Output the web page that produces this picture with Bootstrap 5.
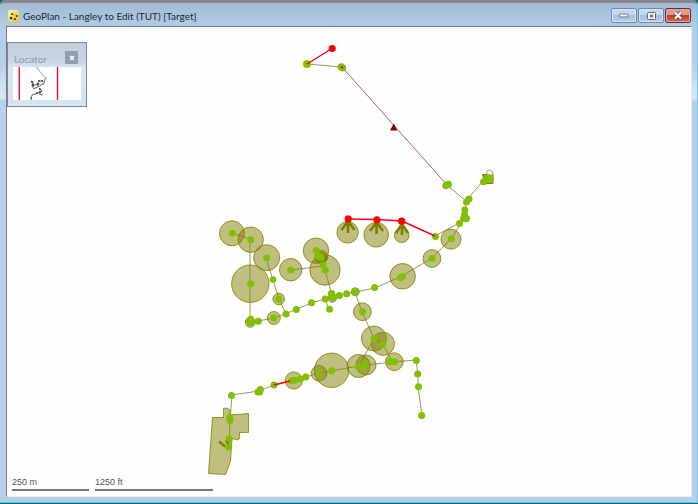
<!DOCTYPE html>
<html lang="en">
<head>
<meta charset="utf-8">
<meta name="viewport" content="width=device-width, initial-scale=1">
<title>GeoPlan - Langley to Edit (TUT) [Target]</title>
<link href="https://cdn.jsdelivr.net/npm/bootstrap@5.3.0/dist/css/bootstrap.min.css" rel="stylesheet">
<style>
body { font-family: Lato, "Open Sans", sans-serif; background: #006a80; }
.geo-window { background: linear-gradient(#a1bad7, #b5cfe9 27px, #b7d0e9 60px, #dae7f4 95px, #b7d0e9 98px); border-top: 3px solid #8b8789; border-right: 1px solid #6cc8e8; border-bottom: 1px solid #5cc8e0; border-radius: 5px 5px 0 0; padding: 0 5px 5px 6px; margin-bottom: 1px; }
.title-bar { height: 23px; padding: 2px 0 0 2px; }
.title-text { font-size: 10px; line-height: 16px; color: #1c2734; }
.win-buttons { gap: 1px; padding-right: 1px; }
.win-btn { width: 26px; height: 15px; padding: 0; border: 1px solid #6f88a6; border-radius: 2px; background: linear-gradient(#c4d7ec 50%, #a5bedb 50%, #b9d3ed); box-shadow: inset 0 0 0 1px #d7e5f4; }
.win-close { border-color: #6d2a2c; background: linear-gradient(#dd9a90 50%, #bd3b25 50%, #d0705a); box-shadow: inset 0 0 0 1px #e4a99f; }
.map-pane { min-height: 0; background: #fefefe; border: 1px solid; border-color: #77797f #e9e8ef #f1efea #77797f; }
.locator { top: 15px; left: 0; width: 80px; height: 65px; padding: 8px 5px 6px 5px; border: 1px solid #85868f; background: linear-gradient(#c2cfde, #c8d5e4 18px, #d9e7f4 26px, #d5e3f1); }
.locator-head { height: 16px; padding: 0 3px 0 1px; }
.locator-name { font-size: 10px; line-height: 16px; color: #8d98a5; }
.locator-close { width: 13px; height: 13px; padding: 0; border: 0; background: #929eae; }
.scale-row { left: 5px; bottom: 5px; gap: 6px; }
.scale-item { font: 9px/11px "Liberation Sans", Arial, sans-serif; color: #55525a; border-bottom: 2px solid #77727a; padding-bottom: 1px; }
.scale-m { width: 77px; }
.scale-ft { width: 118px; }
.area { fill: #808000; fill-opacity: .5; stroke: #808000; stroke-opacity: .8; }
.pipe { fill: none; stroke: #99995a; stroke-width: 1; }
.node { fill: #80c000; }
.alert-line { fill: none; stroke: #fa0010; stroke-width: 1.4; }
.arrow-mark { fill: none; stroke: #808000; stroke-width: 2.6; }
</style>
<script src="https://cdn.jsdelivr.net/npm/bootstrap@5.3.0/dist/js/bootstrap.bundle.min.js"></script>
</head>
<body class="vh-100 d-flex flex-column overflow-hidden">
<main class="geo-window flex-grow-1 d-flex flex-column">
  <header class="title-bar d-flex align-items-center">
    <svg width="11" height="12" viewBox="0 0 11 12" class="me-1 flex-shrink-0" aria-hidden="true">
      <defs><linearGradient id="gold" x2="1" y2="1"><stop stop-color="#fff7a8"/><stop offset="1" stop-color="#f5b719"/></linearGradient></defs>
      <rect width="11" height="12" rx="1.5" fill="url(#gold)"/><path d="M2 9 4 8 6 10M4 4 7 5 9 6" fill="none" stroke="#b59a42" stroke-width=".7"/>
      <g fill="#243047"><circle cx="4.2" cy="4" r="1"/><circle cx="3" cy="8" r="1.2"/><circle cx="8.7" cy="6" r="1"/><circle cx="7" cy="9" r="1"/></g>
    </svg>
    <h1 class="title-text fw-normal m-0 flex-grow-1 text-nowrap">GeoPlan - Langley to Edit (TUT) [Target]</h1>
    <div class="win-buttons d-flex flex-shrink-0">
      <button type="button" class="win-btn d-flex align-items-center justify-content-center" aria-label="Minimize"><svg width="10" height="5"><rect x=".5" y="1" width="8.500" height="3" rx="1" fill="#f6f5f0" stroke="#72767e"/></svg></button>
      <button type="button" class="win-btn d-flex align-items-center justify-content-center" aria-label="Maximize"><svg width="9" height="8"><rect x=".5" y=".5" width="8" height="7" rx="1" fill="#f8f7ef" stroke="#62666e"/><rect x="3" y="2.5" width="3" height="3" fill="#6d8295"/></svg></button>
      <button type="button" class="win-btn win-close d-flex align-items-center justify-content-center" aria-label="Close"><svg width="10" height="9" viewBox="0 0 10 9"><path d="M2 1.5 8 7.5M8 1.5 2 7.5" stroke="#654348" stroke-width="3.8"/><path d="M2 1.5 8 7.5M8 1.5 2 7.5" stroke="#fff" stroke-width="2.2"/></svg></button>
    </div>
  </header>
  <section class="map-pane flex-grow-1 position-relative overflow-hidden" aria-label="Map">
    <svg class="d-block w-100 h-100" viewBox="7 27 684 469" preserveAspectRatio="xMinYMin slice" role="img" aria-label="Network plan">
      <g class="pipe">
        <path d="M307 64 342 67"/>
        <path d="M342 67 447 185" stroke="#ac5c66"/>
        <path d="M447 185 466 201 483 181 489 178M466 201 465 217 459 223 435 236M465 217 451 239 432 258 402 276 375 288 355 292 332 297 311 303 285 314 274 318 258 321 250 322V239L232 233"/>
        <path d="M266 258 273 280 279 299 286 314M291 270 323 266M316 251 325 270 332 295M325 299 329 309M355 292 362 312 374 338 383 344 392 362M374 338 359 366"/>
        <path d="M422 415 418 387 418 374 416 360 392 362 359 366 331 371 319 373 306 377 294 380 274 385 259 391 232 395 230 420 229 447"/>
      </g>
      <g class="area">
        <circle cx="232" cy="233.3" r="12.5"/><circle cx="250.7" cy="239.7" r="12.7"/><circle cx="266.7" cy="257.7" r="13"/><circle cx="250.3" cy="283.7" r="18.7"/>
        <circle cx="290.7" cy="269.7" r="11.2"/><circle cx="316" cy="250.7" r="12.7"/><circle cx="325" cy="270" r="15.2"/><circle cx="321.3" cy="256.8" r="6.5"/><circle cx="321" cy="257.8" r="5.5"/>
        <circle cx="278.7" cy="299" r="5.8"/><circle cx="273.8" cy="318" r="6.5"/><circle cx="250.3" cy="322.3" r="5"/><circle cx="332.3" cy="298" r="4.2"/>
        <circle cx="347.6" cy="232.4" r="10.7"/><circle cx="376.2" cy="234.8" r="12.3"/><circle cx="401.7" cy="235.3" r="7.3"/>
        <circle cx="451" cy="239.2" r="10"/><circle cx="432" cy="258.5" r="8.9"/><circle cx="402.6" cy="276.3" r="12.8"/><circle cx="355.3" cy="291.8" r="4"/>
        <circle cx="362.4" cy="311.7" r="8.9"/><circle cx="373.9" cy="338.5" r="12.5"/><circle cx="383" cy="343.8" r="11.5"/><circle cx="394.3" cy="361.7" r="8.9"/>
        <circle cx="331.6" cy="370.3" r="17.2"/><circle cx="319" cy="373.3" r="7.8"/><circle cx="358.6" cy="366" r="11.5"/><circle cx="366" cy="365" r="10"/><circle cx="293.8" cy="380.5" r="8.6"/>
        <path d="M212.500 417.500H223.500V408.500L227 408 230 410V415L248.500 413.500V432.500H239.500V436L240 438 238 440 232 438.500 230.500 461 225.500 474.500 208.500 473.500Z"/>
      </g>
      <g class="arrow-mark">
        <path d="M348 221V233M348 221 341.500 230M348 221 354.500 230M376.500 222V234M376.500 222 370 231M376.500 222 383 231M402 224V235M402 224 396 233M402 224 408 233"/>
        <path d="M219 441.500 225 446.500M226 440 229 445"/>
      </g>
      <path d="M482.500 174.500H493V183.500H485ZM484 174V183M484 178H493" fill="#a3732f" fill-opacity=".6" stroke="#743b2b" stroke-opacity=".7"/>
      <circle cx="489.600" cy="173" r="3" fill="#fff" stroke="#a3a35c"/>
      <g class="node">
        <circle cx="307" cy="64" r="4"/><circle cx="341.5" cy="67" r="3.8"/><circle cx="342.7" cy="68" r="3.4"/><circle cx="445.8" cy="185.6" r="3.6"/><circle cx="448.300" cy="184.400" r="3.600"/>
        <circle cx="483.500" cy="181.800" r="3.500"/><circle cx="487.500" cy="178" r="4"/><circle cx="489.500" cy="179" r="4.200"/>
        <circle cx="469" cy="199" r="3.500"/><circle cx="466.500" cy="202" r="3.500"/><circle cx="464.800" cy="210" r="3.400"/><circle cx="464.500" cy="215" r="3.500"/><circle cx="466.300" cy="218.500" r="3.700"/><circle cx="463.500" cy="218.500" r="3.500"/><circle cx="459.500" cy="223.500" r="3.500"/>
        <circle cx="435.400" cy="236.500" r="3.500"/><circle cx="451.300" cy="238.700" r="3.500"/><circle cx="432" cy="258.500" r="3.500"/><circle cx="400.500" cy="277.500" r="3.500"/><circle cx="402.500" cy="276.500" r="3.500"/><circle cx="374.600" cy="287.500" r="3.500"/><circle cx="355.400" cy="291.500" r="3.800"/>
        <circle cx="346.700" cy="293.800" r="3.500"/><circle cx="339.400" cy="295.600" r="3.500"/><circle cx="331.600" cy="293.600" r="3.700"/><circle cx="332.500" cy="297" r="3.700"/><circle cx="325.200" cy="299" r="3.500"/><circle cx="329.600" cy="309.300" r="3.500"/><circle cx="311.500" cy="302.800" r="3.500"/><circle cx="296.300" cy="309.500" r="3.500"/><circle cx="286" cy="314" r="3.500"/><circle cx="273.800" cy="318" r="3.500"/><circle cx="258.300" cy="321.300" r="3.500"/><circle cx="250.700" cy="319.300" r="3.500"/><circle cx="250.300" cy="322.500" r="4"/>
        <circle cx="232.300" cy="233.300" r="3.500"/><circle cx="250.700" cy="239.700" r="3.500"/><circle cx="266.700" cy="258" r="3.500"/><circle cx="250.600" cy="283.700" r="3.500"/><circle cx="273" cy="279.600" r="3.300"/><circle cx="278.700" cy="299" r="3.500"/><circle cx="290.700" cy="269.900" r="3.500"/><circle cx="316.200" cy="250.500" r="3.500"/><circle cx="318.500" cy="256.500" r="3.500"/><circle cx="321" cy="257.500" r="3.500"/><circle cx="323" cy="265" r="3.500"/><circle cx="325.300" cy="270" r="3.500"/>
        <circle cx="362.500" cy="311.800" r="3.500"/><circle cx="374" cy="338.700" r="3.500"/><circle cx="382.700" cy="344.300" r="3.500"/><circle cx="389" cy="361.800" r="3.500"/><circle cx="391" cy="361.800" r="3.500"/><circle cx="394.700" cy="361.800" r="3.500"/><circle cx="358.400" cy="366.800" r="3.500"/><circle cx="365.300" cy="365.300" r="3.500"/>
        <circle cx="416.300" cy="360.400" r="3.500"/><circle cx="417.700" cy="374" r="3.500"/><circle cx="418.500" cy="386.800" r="3.500"/><circle cx="421.700" cy="415.500" r="3.500"/><circle cx="331.600" cy="370.700" r="3.500"/><circle cx="319.500" cy="373" r="3.700"/><circle cx="305.700" cy="377" r="3.500"/><circle cx="300.500" cy="379" r="3.500"/><circle cx="294.500" cy="380.300" r="3.500"/><circle cx="291.500" cy="380.800" r="3.500"/>
        <circle cx="274" cy="385" r="3.500"/><circle cx="260.300" cy="389.600" r="3.500"/><circle cx="258" cy="392" r="3.500"/><circle cx="259.800" cy="391.800" r="3.500"/><circle cx="231.500" cy="395.500" r="3.500"/><circle cx="229.800" cy="417.500" r="3.500"/><circle cx="230" cy="420.500" r="3.500"/><circle cx="229" cy="438.800" r="3.500"/><circle cx="228.500" cy="447.300" r="3.500"/>
      </g>
      <g class="alert-line"><path d="M307 64 332 48.500M348 219 377 219.500 402 221 435 236M274 385 290 381"/></g>
      <g fill="#fb0007"><circle cx="332.200" cy="48.500" r="3.600"/><circle cx="348.200" cy="218.900" r="3.600"/><circle cx="376.900" cy="219.800" r="3.600"/><circle cx="401.700" cy="221.200" r="3.600"/><circle cx="342" cy="67.300" r="1.200"/></g>
      <path d="M393.700 123.500 397.300 130.500H390Z" fill="#800000"/>
    </svg>
    <aside class="locator position-absolute d-flex flex-column" aria-label="Locator">
      <div class="locator-head d-flex justify-content-between align-items-start">
        <h2 class="locator-name fw-normal m-0">Locator</h2>
        <button type="button" class="locator-close d-flex align-items-center justify-content-center" aria-label="Close locator"><svg width="6" height="6"><path d="M1 1 5 5M5 1 1 5" stroke="#fff" stroke-width="1.500"/></svg></button>
      </div>
      <svg class="flex-grow-1 w-100 bg-white" viewBox="0 0 68 33" preserveAspectRatio="xMinYMin meet" aria-hidden="true">
        <path d="M6.300 0V33M44.500 0V33" stroke="#e81018" stroke-width="1.400"/>
        <path d="M23 1H25M24 1 33 12M33 12V10" fill="none" stroke="#8d8d8d" stroke-width=".800"/>
        <path d="M32 12 31 16 27 19 20 22M18 14 20 15V21M22 17 25 19M25 14 30 14M26 21 29 24 26 26 19 28 18 33M26 27 30 28" fill="none" stroke="#666" stroke-width="1"/>
        <g fill="#444"><circle cx="19" cy="15" r="1.100"/><circle cx="20" cy="18" r="1.500"/><circle cx="25" cy="17" r="1.400"/><circle cx="26" cy="14" r="1"/><circle cx="29" cy="14" r="1"/><circle cx="30" cy="17" r=".800"/><circle cx="27" cy="22" r="1"/><circle cx="27" cy="25" r="1.200"/><circle cx="24" cy="26" r="1"/><circle cx="18" cy="31" r=".800"/></g>
      </svg>
    </aside>
    <div class="scale-row position-absolute d-flex">
      <div class="scale-item scale-m">250 m</div>
      <div class="scale-item scale-ft">1250 ft</div>
    </div>
  </section>
</main>
</body>
</html>
